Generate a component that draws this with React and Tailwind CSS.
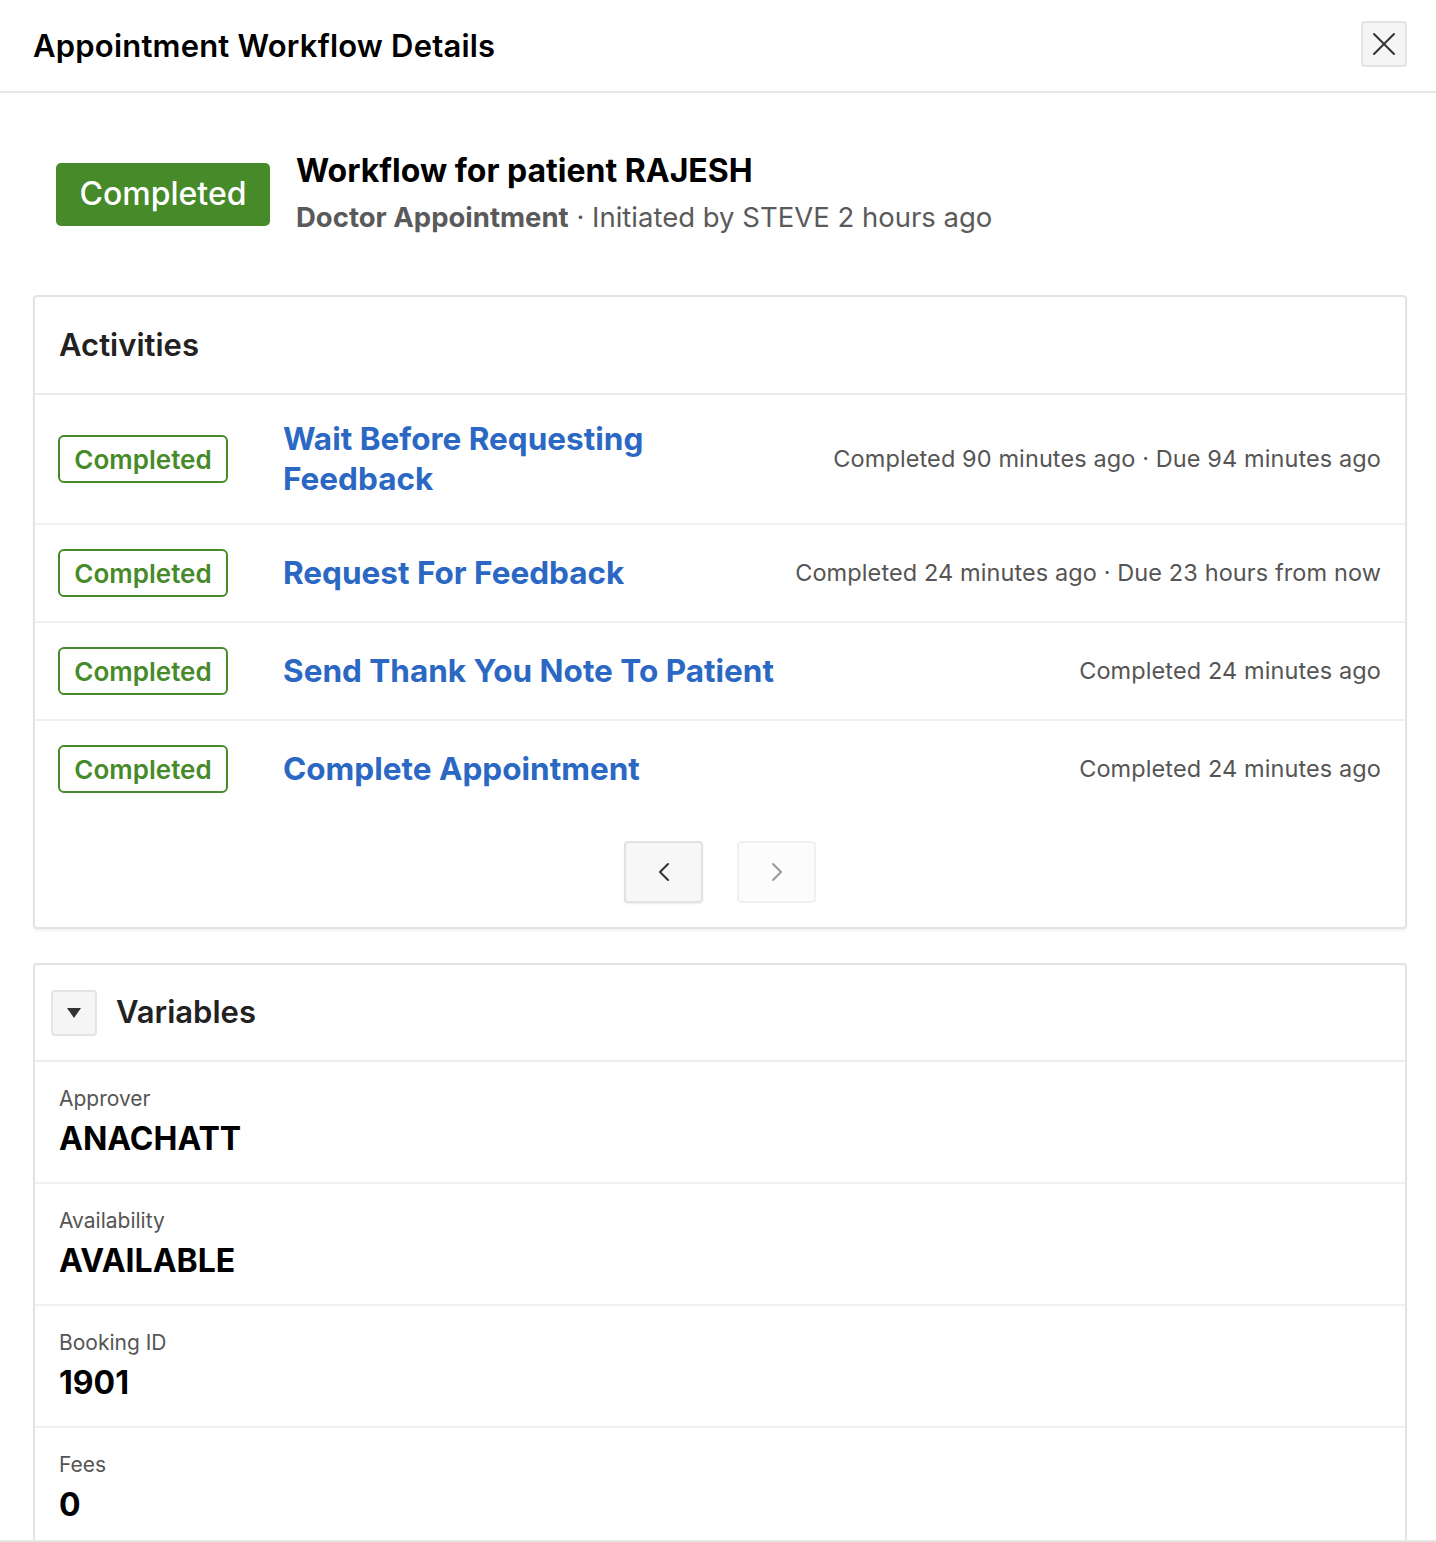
import React from "react";

const activities = [
  { title: "Wait Before Requesting Feedback", meta: "Completed 90 minutes ago · Due 94 minutes ago" },
  { title: "Request For Feedback", meta: "Completed 24 minutes ago · Due 23 hours from now" },
  { title: "Send Thank You Note To Patient", meta: "Completed 24 minutes ago" },
  { title: "Complete Appointment", meta: "Completed 24 minutes ago" },
];

const variables = [
  { label: "Approver", value: "ANACHATT" },
  { label: "Availability", value: "AVAILABLE" },
  { label: "Booking ID", value: "1901" },
  { label: "Fees", value: "0" },
];

export default function App() {
  return (
    <div className="h-[1542px] w-full bg-white flex flex-col overflow-hidden font-['Inter',_'Liberation_Sans',_sans-serif] text-black">
      {/* Header */}
      <header className="h-[93px] shrink-0 border-b-2 border-[#e6e6e6] flex items-center justify-between pl-[33px] pr-[29px]">
        <h1 className="text-[31px] leading-[40px] font-semibold tracking-[0.2px]">Appointment Workflow Details</h1>
        <button className="w-[46px] h-[46px] mt-[-3px] rounded-[4px] border-2 border-[#e4e4e4] bg-[#f5f5f5] flex items-center justify-center">
          <svg width="24" height="24" viewBox="0 0 24 24" fill="none" stroke="#333" strokeWidth="2" strokeLinecap="round">
            <path d="M2 2 L22 22 M22 2 L2 22" />
          </svg>
        </button>
      </header>

      {/* Body */}
      <main className="flex-1 overflow-hidden pl-[33px] pr-[29px]">
        {/* Summary */}
        <section className="h-[202px] flex items-center pl-[23px] gap-[26px]">
          <div className="w-[214px] h-[63px] rounded-[5px] bg-[#468a29] text-white text-[32px] font-medium flex items-center justify-center">
            Completed
          </div>
          <div className="flex flex-col pt-[2px]">
            <div className="text-[32px] leading-[40px] font-bold text-black">Workflow for patient RAJESH</div>
            <div className="text-[27.5px] leading-[44px] mt-[4px] text-[#5a5a5a]">
              <span className="font-bold">Doctor Appointment</span>
              <span> · Initiated by STEVE 2 hours ago</span>
            </div>
          </div>
        </section>

        {/* Activities panel */}
        <section className="border-2 border-[#e3e3e3] rounded-[4px] shadow-[0_2px_3px_rgba(0,0,0,0.05)]">
          <div className="h-[98px] border-b-2 border-[#ececec] flex items-center px-[24px]">
            <h2 className="text-[31px] font-semibold text-[#222]">Activities</h2>
          </div>
          {activities.map((a, i) => (
            <div
              key={a.title}
              className={`flex items-center py-[24px] pl-[23px] pr-[24px] ${i < activities.length - 1 ? "border-b-2 border-[#f0f0f0]" : ""}`}
            >
              <div className="w-[170px] h-[48px] shrink-0 rounded-[6px] border-2 border-[#468a29] text-[#468a29] text-[26px] font-semibold flex items-center justify-center">
                Completed
              </div>
              <div className="ml-[55px] flex-1 min-w-0">
                <div className="max-w-[505px] text-[31.5px] leading-[40px] font-bold text-[#2b68c4]">{a.title}</div>
              </div>
              <div className="shrink-0 ml-[24px] text-[23.5px] tracking-[0.1px] text-[#555] text-right">{a.meta}</div>
            </div>
          ))}
          <div className="flex justify-center gap-[34px] pt-[24px] pb-[24px]">
            <button className="w-[79px] h-[62px] rounded-[4px] border-2 border-[#e2e2e2] bg-[#f7f7f7] shadow-[0_1px_2px_rgba(0,0,0,0.08)] flex items-center justify-center">
              <svg width="12" height="20" viewBox="0 0 12 20" fill="none" stroke="#333" strokeWidth="2" strokeLinecap="round" strokeLinejoin="round">
                <path d="M10 2 L2 10 L10 18" />
              </svg>
            </button>
            <button className="w-[79px] h-[62px] rounded-[4px] border-2 border-[#f0f0f0] bg-[#fcfcfc] flex items-center justify-center">
              <svg width="12" height="20" viewBox="0 0 12 20" fill="none" stroke="#999" strokeWidth="2" strokeLinecap="round" strokeLinejoin="round">
                <path d="M2 2 L10 10 L2 18" />
              </svg>
            </button>
          </div>
        </section>

        {/* Variables panel */}
        <section className="mt-[34px] border-2 border-[#e3e3e3] rounded-[4px]">
          <div className="h-[97px] border-b-2 border-[#ececec] flex items-center pl-[16px] gap-[19px]">
            <button className="w-[46px] h-[46px] rounded-[4px] border-2 border-[#e4e4e4] bg-[#f5f5f5] flex items-center justify-center">
              <svg width="16" height="12" viewBox="0 0 16 12">
                <path d="M1 1 L15 1 L8 11 Z" fill="#333" />
              </svg>
            </button>
            <h2 className="text-[31px] font-semibold text-[#222]">Variables</h2>
          </div>
          {variables.map((v, i) => (
            <div
              key={v.label}
              className={`py-[23px] px-[24px] ${i < variables.length - 1 ? "border-b-2 border-[#f0f0f0]" : ""}`}
            >
              <div className="text-[21px] leading-[28px] text-[#555]">{v.label}</div>
              <div className="mt-[6px] text-[32px] leading-[40px] font-bold text-black">{v.value}</div>
            </div>
          ))}
        </section>
      </main>

      {/* Footer edge */}
      <div className="h-[2px] shrink-0 bg-[#e6e6e6]" />
    </div>
  );
}
